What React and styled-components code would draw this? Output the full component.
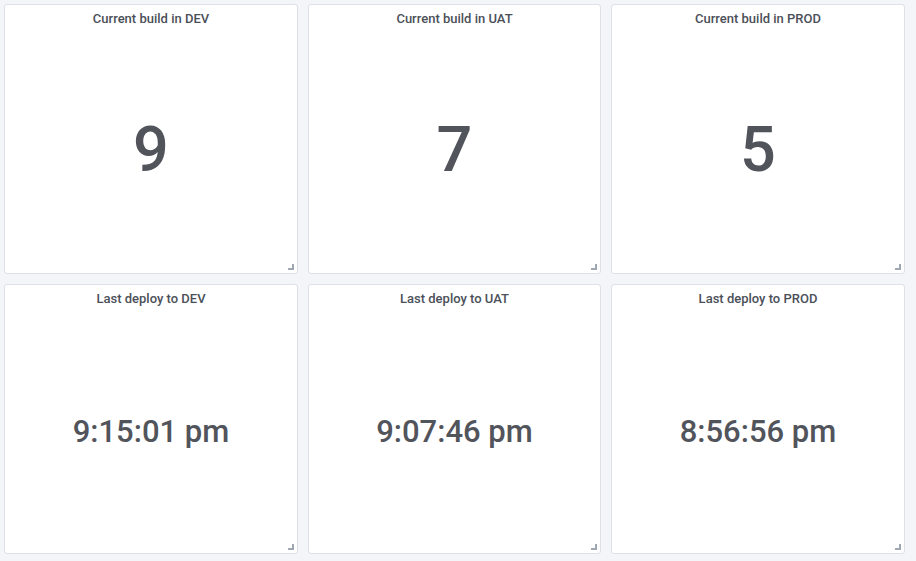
import React from "react";
import styled, { createGlobalStyle } from "styled-components";

const Global = createGlobalStyle`
  html, body { margin: 0; padding: 0; background: #f4f5f8; }
  body { font-family: Roboto, "Liberation Sans", sans-serif; }
`;

const Grid = styled.div`
  display: grid;
  grid-template-columns: 294px 293px 294px;
  grid-template-rows: repeat(2, 270px);
  column-gap: 10px;
  row-gap: 10px;
  padding: 4px;
`;

const Panel = styled.div`
  position: relative;
  display: flex;
  flex-direction: column;
  background: #ffffff;
  border: 1px solid #dde0e7;
  border-radius: 3px;
  box-sizing: border-box;
`;

const Header = styled.div`
  height: 27px;
  display: flex;
  align-items: center;
  justify-content: center;
  font-size: 13px;
  font-weight: 500;
  color: #4b5058;
`;

const Body = styled.div`
  flex: 1;
  display: flex;
  align-items: center;
  justify-content: center;
  color: #52545c;
  font-size: ${(p) => p.$size}px;
  font-weight: 500;
  padding-bottom: ${(p) => p.$pad}px;
`;

const Handle = styled.div`
  position: absolute;
  right: 3px;
  bottom: 3px;
  width: 6px;
  height: 6px;
  border-right: 2px solid #9fa7b3;
  border-bottom: 2px solid #9fa7b3;
  box-sizing: border-box;
`;

const panels = [
  { title: "Current build in DEV", value: "9", size: 63, pad: 6 },
  { title: "Current build in UAT", value: "7", size: 63, pad: 6 },
  { title: "Current build in PROD", value: "5", size: 63, pad: 6 },
  { title: "Last deploy to DEV", value: "9:15:01 pm", size: 31, pad: 2 },
  { title: "Last deploy to UAT", value: "9:07:46 pm", size: 31, pad: 2 },
  { title: "Last deploy to PROD", value: "8:56:56 pm", size: 31, pad: 2 },
];

export default function App() {
  return (
    <>
      <Global />
      <Grid>
        {panels.map((p) => (
          <Panel key={p.title}>
            <Header>{p.title}</Header>
            <Body $size={p.size} $pad={p.pad}>{p.value}</Body>
            <Handle />
          </Panel>
        ))}
      </Grid>
    </>
  );
}
